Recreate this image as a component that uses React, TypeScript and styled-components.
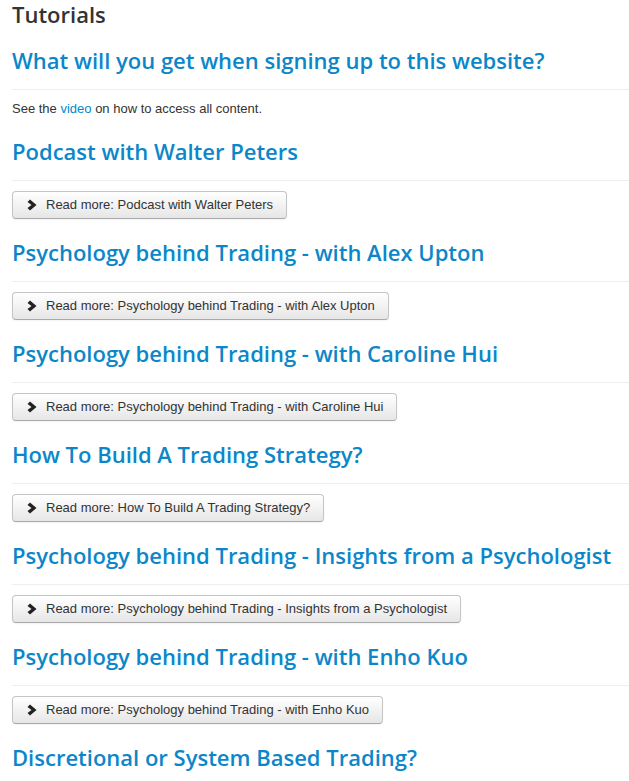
import React from "react";
import styled, { createGlobalStyle } from "styled-components";

const GlobalStyle = createGlobalStyle`
  html, body { margin: 0; padding: 0; background: #fff; }
  body { font-family: "Liberation Sans", Arial, sans-serif; font-size: 13px; line-height: 18px; color: #333; }
`;

const Page = styled.div`
  padding: 0 0 0 12px;
  overflow: hidden;
`;

const PageTitle = styled.h1`
  margin: 0 0 12px;
  font-family: "Open Sans", sans-serif;
  font-weight: 600;
  font-size: 22px;
  line-height: 28px;
  color: #333;
`;

const Section = styled.section`
  display: flex;
  flex-direction: column;
  align-items: flex-start;
  margin-bottom: 13px;
`;

const Header = styled.div`
  align-self: stretch;
  padding-bottom: 9px;
  border-bottom: 1px solid #eee;
  margin-bottom: 10px;
`;

const Title = styled.h2`
  margin: 0;
  font-family: "Open Sans", sans-serif;
  font-weight: 600;
  font-size: 22px;
  line-height: 40px;
  color: #0b87c9;
  white-space: nowrap;
`;

const Text = styled.p`
  margin: 0;
  font-size: 13px;
  line-height: 18px;
  color: #333;
`;

const Link = styled.a`
  color: #0088cc;
  text-decoration: none;
`;

const Button = styled.a`
  display: inline-flex;
  align-items: center;
  box-sizing: border-box;
  height: 28px;
  padding: 4px 13px 4px 12px;
  font-size: 13px;
  line-height: 18px;
  color: #333;
  text-decoration: none;
  background: linear-gradient(to bottom, #ffffff, #e6e6e6);
  border: 1px solid #c5c5c5;
  border-bottom-color: #a9a9a9;
  border-radius: 4px;
  box-shadow: inset 0 1px 0 rgba(255, 255, 255, 0.2), 0 1px 2px rgba(0, 0, 0, 0.05);
  white-space: nowrap;
`;

const Icon = styled.svg`
  width: 10px;
  height: 12px;
  margin: 0 9px 0 2px;
  flex: none;
`;

const Chevron = () => (
  <Icon viewBox="0 0 10 12">
    <path d="M3 0.5 L9.5 6 L3 11.5 L0.5 9 L4.5 6 L0.5 3 Z" fill="#222" />
  </Icon>
);

const items = [
  "Podcast with Walter Peters",
  "Psychology behind Trading - with Alex Upton",
  "Psychology behind Trading - with Caroline Hui",
  "How To Build A Trading Strategy?",
  "Psychology behind Trading - Insights from a Psychologist",
  "Psychology behind Trading - with Enho Kuo",
];

export default function App() {
  return (
    <Page>
      <GlobalStyle />
      <PageTitle>Tutorials</PageTitle>
      <Section>
        <Header>
          <Title>What will you get when signing up to this website?</Title>
        </Header>
        <Text>
          See the <Link href="#">video</Link> on how to access all content.
        </Text>
      </Section>
      {items.map((t) => (
        <Section key={t}>
          <Header>
            <Title>{t}</Title>
          </Header>
          <Button href="#">
            <Chevron />
            Read more: {t}
          </Button>
        </Section>
      ))}
      <Section>
        <Header>
          <Title>Discretional or System Based Trading?</Title>
        </Header>
      </Section>
    </Page>
  );
}
